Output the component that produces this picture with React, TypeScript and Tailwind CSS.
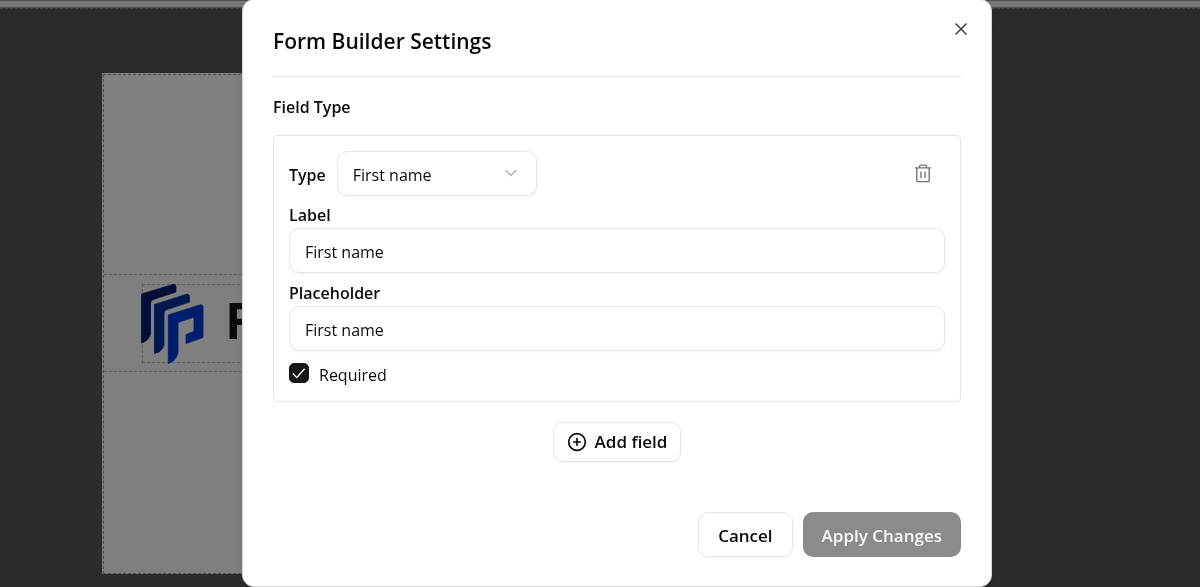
import { useState } from "react";
import { CirclePlus } from "lucide-react";
import { PiTrash } from "react-icons/pi";
import { clsx } from "clsx";

/* ------------------------------------------------------------------ */
/*  Icons                                                             */
/* ------------------------------------------------------------------ */

function CrossIcon() {
  return (
    <svg className="size-5" viewBox="0 0 20 20" fill="none" stroke="currentColor" strokeWidth={1.5} aria-hidden="true">
      <path d="M4.5 4.5l11 11M15.5 4.5l-11 11" />
    </svg>
  );
}

function ChevronIcon({ className }: { className?: string }) {
  return (
    <svg className={className} viewBox="0 0 20 20" fill="none" stroke="currentColor" strokeWidth={1.6} aria-hidden="true">
      <path d="M4.400 7l5.600 5.400 5.600-5.400" />
    </svg>
  );
}

function BrandMark() {
  return (
    <svg className="-ml-0.5 h-20 w-16 shrink-0 overflow-visible" viewBox="0 0 64 80" strokeWidth={0.8} aria-hidden="true">
      <path
        fill="#001c70"
        stroke="#001c70"
        d="M.5 10 32 .4Q35-.3 35 3V8L12 15.500Q9.500 16.500 9.500 19V50Q8 56 2 58.500L.5 59Z"
      />
      <path
        fill="#0030a0"
        stroke="#0030a0"
        d="M13.500 20.500 45 10.500Q48.500 9.500 48.500 13V18L26 25.500Q23 26.500 23 29V61Q21 68 13.500 69.500Z"
      />
      <path
        fill="#003ddc"
        stroke="#003ddc"
        d="M27.300 31 58.500 21Q62 20 62 23.500V53.500L45 59.500V50.500L53 47.500V33L37 38.500V69Q35 77 27.300 79.500Z"
      />
    </svg>
  );
}

/* ------------------------------------------------------------------ */
/*  Form primitives                                                   */
/* ------------------------------------------------------------------ */

function Field({ id, label, value, onChange }: { id: string; label: string; value: string; onChange: (v: string) => void }) {
  return (
    <div className="flex flex-col">
      <label htmlFor={id} className="mb-0.5 leading-[22px] font-semibold">
        {label}
      </label>
      <input
        id={id}
        value={value}
        onChange={(e) => onChange(e.target.value)}
        className="h-[45px] w-full rounded-[10px] border border-neutral-200 px-[15px] pt-0.5 shadow-xs outline-none focus:border-neutral-400"
      />
    </div>
  );
}

function Button({ className, ...props }: React.ButtonHTMLAttributes<HTMLButtonElement>) {
  return (
    <button
      type="button"
      {...props}
      className={clsx("inline-flex items-center justify-center rounded-[10px] text-[17px] font-semibold", className)}
    />
  );
}

/* ------------------------------------------------------------------ */
/*  Page behind the dialog                                            */
/* ------------------------------------------------------------------ */

function EditorCanvas() {
  return (
    <div className="min-h-screen bg-[#575757]">
      <div className="h-2 border-t border-b border-t-[#9a9a9a] border-b-[#9a9a9a] bg-[#ececec]" />
      <div className="border-t border-dashed border-[#888888] px-[102px] pt-16">
        <div className="max-w-[800px] bg-white pt-px pl-px">
          <div className="flex h-[500px] flex-col border border-dashed border-[#999999]">
            <div className="h-[199px]" />
            <div className="border-y border-dashed border-[#bbbbbb] pt-[9px] pb-2 pl-[38px]">
              <div className="flex h-[79px] items-center gap-5 border border-dashed border-[#bbbbbb]">
                <BrandMark />
                <span className="pb-2 text-[50px] leading-none font-bold text-neutral-900">F</span>
              </div>
            </div>
          </div>
        </div>
      </div>
    </div>
  );
}

/* ------------------------------------------------------------------ */
/*  Dialog                                                            */
/* ------------------------------------------------------------------ */

function SettingsDialog() {
  const [label, setLabel] = useState("First name");
  const [placeholder, setPlaceholder] = useState("First name");
  const [required, setRequired] = useState(true);

  return (
    <div
      role="dialog"
      aria-labelledby="dialog-title"
      className="relative flex w-full max-w-[750px] flex-col rounded-xl border border-neutral-300 bg-white px-[30px] pb-[29px] shadow-lg"
    >
      <header className="flex h-[77px] items-center border-b border-neutral-200 pt-1.5">
        <h2 id="dialog-title" className="text-[21px] leading-8 font-semibold">
          Form Builder Settings
        </h2>
      </header>
      <button type="button" aria-label="Close" className="absolute top-[19px] right-5 text-neutral-700">
        <CrossIcon />
      </button>

      <h3 className="mt-[18px] font-semibold">Field Type</h3>

      <section className="mt-4 flex flex-col gap-[9px] rounded border border-neutral-200 px-[15px] pt-[15px] pb-[14px]">
        <div className="-mb-px flex items-center">
          <label htmlFor="field-type" className="pt-0.5 font-semibold">
            Type
          </label>
          <div className="relative ml-[11px] w-[200px]">
            <select
              id="field-type"
              className="block h-[45px] w-full appearance-none rounded-[10px] border border-neutral-200 bg-white px-[15px] pt-0.5 shadow-xs outline-none"
            >
              <option>First name</option>
              <option>Last name</option>
              <option>Email</option>
            </select>
            <ChevronIcon className="pointer-events-none absolute top-3 right-4 size-5 text-[#b5b5b5]" />
          </div>
          <button type="button" aria-label="Remove field" className="ml-auto flex w-11 justify-center text-neutral-500">
            <PiTrash className="size-[22px]" />
          </button>
        </div>

        <Field id="field-label" label="Label" value={label} onChange={setLabel} />
        <Field id="field-placeholder" label="Placeholder" value={placeholder} onChange={setPlaceholder} />

        <label className="mt-[3px] flex items-start gap-[10px]">
          <span className="relative size-5">
            <input
              type="checkbox"
              checked={required}
              onChange={(e) => setRequired(e.target.checked)}
              className="block size-5 appearance-none rounded-[5px] border border-neutral-900 checked:bg-neutral-900"
            />
            {required && (
              <svg
                className="pointer-events-none absolute inset-0 size-5"
                viewBox="0 0 20 20"
                fill="none"
                stroke="#ffffff"
                strokeWidth={1.4}
                aria-hidden="true"
              >
                <path d="M3.800 10.600l4 3.800 7.800-8.600" />
              </svg>
            )}
          </span>
          Required
        </label>
      </section>

      <Button className="mt-5 h-10 gap-2 self-center border border-neutral-200 px-[13px] shadow-xs">
        <CirclePlus className="size-5" />
        Add field
      </Button>

      <footer className="mt-[50px] flex justify-end gap-[10px]">
        <Button className="h-[45px] border border-neutral-200 px-[19px] pt-0.5 shadow-xs">Cancel</Button>
        <Button disabled className="h-[45px] bg-[#8b8b8b] px-[19px] pt-0.5 text-neutral-50">
          Apply Changes
        </Button>
      </footer>
    </div>
  );
}

export default function App() {
  return (
    <div className="h-screen overflow-hidden font-['Open_Sans',sans-serif] text-base text-neutral-950">
      <EditorCanvas />
      <div className="fixed inset-0 flex items-end justify-center bg-black/50 pl-[34px]">
        <SettingsDialog />
      </div>
    </div>
  );
}
